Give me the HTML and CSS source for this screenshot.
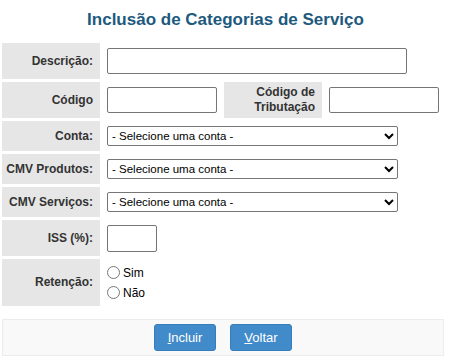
FILE: index.html
```html
<!DOCTYPE html>
<html lang="pt-BR">
<head>
  <meta charset="UTF-8" />
  <title>Inclusão de Categorias de Serviço</title>
  <link rel="stylesheet" href="styles.css">
</head>
<body>
  <h1 class="titulo">Inclusão de Categorias de Serviço</h1>

  <form>
    <table class="form-tabela">
      <tr class="linha-alta">
        <th>Descrição:</th>
        <td colspan="3"><input type="text" class="campo campo-descricao" /></td>
      </tr>
      <tr class="linha-alta">
        <th>Código</th>
        <td class="col-codigo"><input type="text" class="campo campo-codigo" /></td>
        <th class="col-label2">Código de<br>Tributação</th>
        <td><input type="text" class="campo campo-codigo" /></td>
      </tr>
      <tr class="linha-select">
        <th>Conta:</th>
        <td colspan="3">
          <select class="combo"><option>- Selecione uma conta -</option></select>
        </td>
      </tr>
      <tr class="linha-select">
        <th>CMV Produtos:</th>
        <td colspan="3">
          <select class="combo"><option>- Selecione uma conta -</option></select>
        </td>
      </tr>
      <tr class="linha-select">
        <th>CMV Serviços:</th>
        <td colspan="3">
          <select class="combo"><option>- Selecione uma conta -</option></select>
        </td>
      </tr>
      <tr class="linha-alta">
        <th>ISS (%):</th>
        <td colspan="3"><input type="text" class="campo campo-iss" /></td>
      </tr>
      <tr class="linha-radio">
        <th>Retenção:</th>
        <td colspan="3">
          <label class="opcao"><input type="radio" name="retencao" /> Sim</label>
          <label class="opcao"><input type="radio" name="retencao" /> Não</label>
        </td>
      </tr>
    </table>

    <div class="barra-botoes">
      <button type="button" class="botao"><u>I</u>ncluir</button>
      <button type="button" class="botao"><u>V</u>oltar</button>
    </div>
  </form>
</body>
</html>
```

FILE: styles.css
```css
body {
  margin: 0;
  padding: 0;
  background: #fff;
  font-family: 'DejaVu Sans', Verdana, sans-serif;
  font-size: 12px;
  color: #333;
}
.titulo {
  margin: 0;
  padding-top: 10px;
  height: 40px;
  box-sizing: border-box;
  text-align: center;
  font-family: 'Liberation Sans', Arial, sans-serif;
  font-size: 17px;
  font-weight: bold;
  color: #1d5a7e;
}
.form-tabela {
  border-spacing: 3px;
  margin-left: -1px;
  width: 448px;
}
.form-tabela th {
  width: 91px;
  padding: 0 7px 0 0;
  background: #e6e6e6;
  text-align: right;
  font-family: 'Liberation Sans', Arial, sans-serif;
  font-size: 12px;
  font-weight: bold;
  color: #333;
  line-height: 15px;
}
.form-tabela td {
  padding: 0 0 0 4px;
}
.linha-alta th, .linha-alta td {
  height: 36px;
}
.linha-select th, .linha-select td {
  height: 30px;
}
.linha-radio th, .linha-radio td {
  height: 47px;
}
.col-codigo {
  width: 114px;
}
.form-tabela .col-label2 {
  width: 91px;
}
.campo {
  box-sizing: border-box;
  height: 26px;
  border: 1px solid #767676;
  border-radius: 2px;
  padding: 2px 4px;
  font-size: 12px;
}
.campo-descricao { width: 300px; }
.campo-codigo { width: 110px; }
.campo-iss { width: 50px; height: 27px; }
.combo {
  box-sizing: border-box;
  width: 291px;
  height: 20px;
  border: 1px solid #767676;
  border-radius: 2px;
  background: #fff;
  font-family: 'Liberation Sans', Arial, sans-serif;
  font-size: 11.5px;
  color: #000;
}
.opcao {
  display: flex;
  align-items: center;
  gap: 3px;
  height: 20px;
  font-family: 'Liberation Sans', Arial, sans-serif;
  font-size: 12px;
  color: #000;
}
.opcao input {
  margin: 0;
  width: 13px;
  height: 13px;
}
.barra-botoes {
  margin: 10px 7px 0 2px;
  height: 37px;
  box-sizing: border-box;
  background: #f9f9f9;
  border: 1px solid #ececec;
  display: flex;
  justify-content: center;
  align-items: center;
  gap: 14px;
}
.botao {
  width: 62px;
  height: 27px;
  background: #428bca;
  border: 1px solid #357ebd;
  border-radius: 3px;
  color: #fff;
  font-family: 'Liberation Sans', Arial, sans-serif;
  font-size: 13px;
  cursor: pointer;
}
.botao:hover {
  background: #3071a9;
}
```
